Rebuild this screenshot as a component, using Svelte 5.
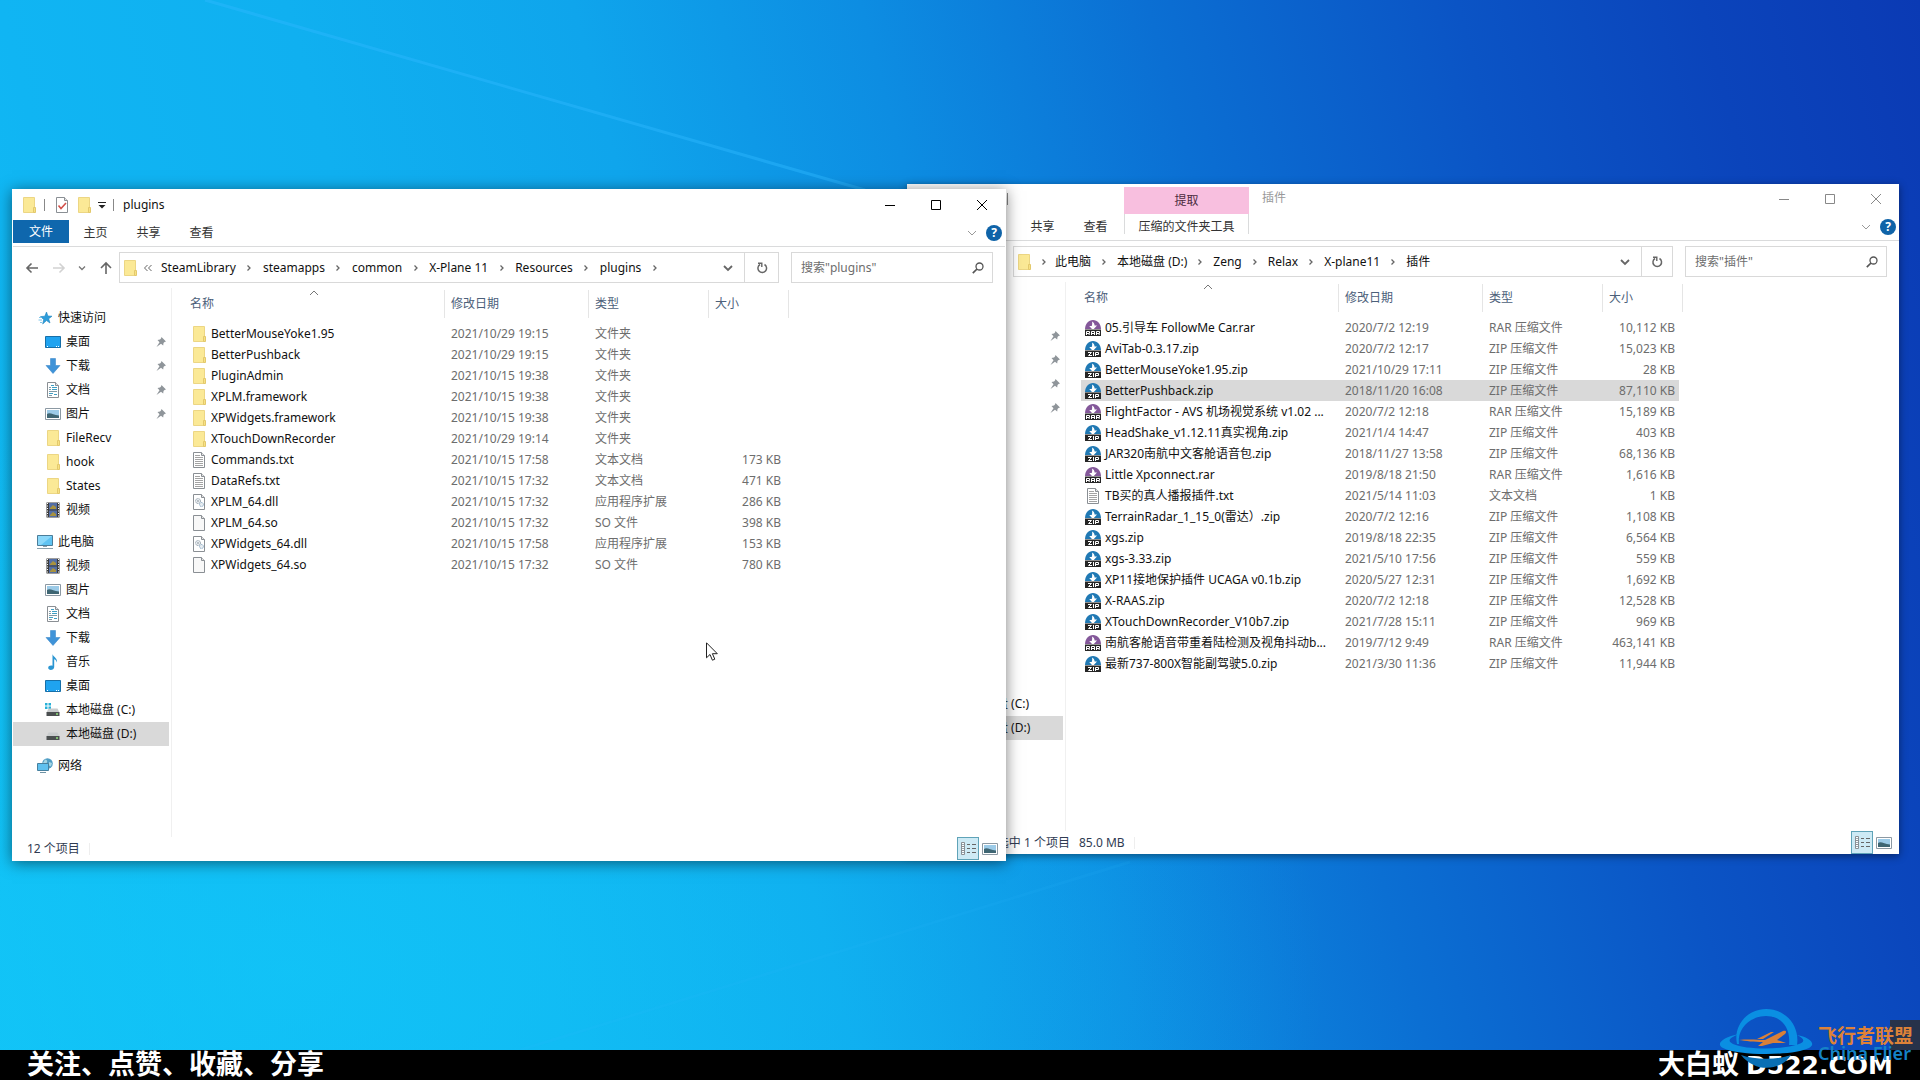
<script lang="ts">
  type Entry = { name: string; date: string; type: string; size?: string; icon: string };
  type Explorer = {
    title: string;
    context?: { group: string; tab: string };
    truncated?: boolean;
    crumbs: string[];
    entries: Entry[];
    selected?: string;
    status: string[];
  };

  const folder = "文件夹";
  const zip = "ZIP 压缩文件";
  const rar = "RAR 压缩文件";

  const sidebar = [
    [
      { label: "快速访问", icon: "star" },
      { label: "桌面", icon: "desktop", pinned: true },
      { label: "下载", icon: "download", pinned: true },
      { label: "文档", icon: "document", pinned: true },
      { label: "图片", icon: "picture", pinned: true },
      { label: "FileRecv", icon: "folder" },
      { label: "hook", icon: "folder" },
      { label: "States", icon: "folder" },
      { label: "视频", icon: "video" },
    ],
    [
      { label: "此电脑", icon: "pc" },
      { label: "视频", icon: "video" },
      { label: "图片", icon: "picture" },
      { label: "文档", icon: "document" },
      { label: "下载", icon: "download" },
      { label: "音乐", icon: "music" },
      { label: "桌面", icon: "desktop" },
      { label: "本地磁盘 (C:)", icon: "system-disk" },
      { label: "本地磁盘 (D:)", icon: "disk", selected: true },
    ],
    [{ label: "网络", icon: "network" }],
  ];

  const archives: Explorer = {
    title: "插件",
    context: { group: "提取", tab: "压缩的文件夹工具" },
    crumbs: ["此电脑", "本地磁盘 (D:)", "Zeng", "Relax", "X-plane11", "插件"],
    selected: "BetterPushback.zip",
    status: ["17 个项目", "选中 1 个项目", "85.0 MB"],
    entries: [
      { name: "05.引导车 FollowMe Car.rar", date: "2020/7/2 12:19", type: rar, size: "10,112 KB", icon: "rar" },
      { name: "AviTab-0.3.17.zip", date: "2020/7/2 12:17", type: zip, size: "15,023 KB", icon: "zip" },
      { name: "BetterMouseYoke1.95.zip", date: "2021/10/29 17:11", type: zip, size: "28 KB", icon: "zip" },
      { name: "BetterPushback.zip", date: "2018/11/20 16:08", type: zip, size: "87,110 KB", icon: "zip" },
      { name: "FlightFactor - AVS 机场视觉系统 v1.02 ...", date: "2020/7/2 12:18", type: rar, size: "15,189 KB", icon: "rar" },
      { name: "HeadShake_v1.12.11真实视角.zip", date: "2021/1/4 14:47", type: zip, size: "403 KB", icon: "zip" },
      { name: "JAR320南航中文客舱语音包.zip", date: "2018/11/27 13:58", type: zip, size: "68,136 KB", icon: "zip" },
      { name: "Little Xpconnect.rar", date: "2019/8/18 21:50", type: rar, size: "1,616 KB", icon: "rar" },
      { name: "TB买的真人播报插件.txt", date: "2021/5/14 11:03", type: "文本文档", size: "1 KB", icon: "text" },
      { name: "TerrainRadar_1_15_0(雷达）.zip", date: "2020/7/2 12:16", type: zip, size: "1,108 KB", icon: "zip" },
      { name: "xgs.zip", date: "2019/8/18 22:35", type: zip, size: "6,564 KB", icon: "zip" },
      { name: "xgs-3.33.zip", date: "2021/5/10 17:56", type: zip, size: "559 KB", icon: "zip" },
      { name: "XP11接地保护插件 UCAGA v0.1b.zip", date: "2020/5/27 12:31", type: zip, size: "1,692 KB", icon: "zip" },
      { name: "X-RAAS.zip", date: "2020/7/2 12:18", type: zip, size: "12,528 KB", icon: "zip" },
      { name: "XTouchDownRecorder_V10b7.zip", date: "2021/7/28 15:11", type: zip, size: "969 KB", icon: "zip" },
      { name: "南航客舱语音带重着陆检测及视角抖动b...", date: "2019/7/12 9:49", type: rar, size: "463,141 KB", icon: "rar" },
      { name: "最新737-800X智能副驾驶5.0.zip", date: "2021/3/30 11:36", type: zip, size: "11,944 KB", icon: "zip" },
    ],
  };

  const plugins: Explorer = {
    title: "plugins",
    truncated: true,
    crumbs: ["SteamLibrary", "steamapps", "common", "X-Plane 11", "Resources", "plugins"],
    status: ["12 个项目"],
    entries: [
      { name: "BetterMouseYoke1.95", date: "2021/10/29 19:15", type: folder, icon: "folder" },
      { name: "BetterPushback", date: "2021/10/29 19:15", type: folder, icon: "folder" },
      { name: "PluginAdmin", date: "2021/10/15 19:38", type: folder, icon: "folder" },
      { name: "XPLM.framework", date: "2021/10/15 19:38", type: folder, icon: "folder" },
      { name: "XPWidgets.framework", date: "2021/10/15 19:38", type: folder, icon: "folder" },
      { name: "XTouchDownRecorder", date: "2021/10/29 19:14", type: folder, icon: "folder" },
      { name: "Commands.txt", date: "2021/10/15 17:58", type: "文本文档", size: "173 KB", icon: "text" },
      { name: "DataRefs.txt", date: "2021/10/15 17:32", type: "文本文档", size: "471 KB", icon: "text" },
      { name: "XPLM_64.dll", date: "2021/10/15 17:32", type: "应用程序扩展", size: "286 KB", icon: "dll" },
      { name: "XPLM_64.so", date: "2021/10/15 17:32", type: "SO 文件", size: "398 KB", icon: "blank" },
      { name: "XPWidgets_64.dll", date: "2021/10/15 17:58", type: "应用程序扩展", size: "153 KB", icon: "dll" },
      { name: "XPWidgets_64.so", date: "2021/10/15 17:32", type: "SO 文件", size: "780 KB", icon: "blank" },
    ],
  };
</script>

{#snippet icon(name: string)}
  <svg class="icon" viewBox="0 0 16 16" aria-hidden="true">
    {#if name === "folder"}
      <path d="M2.500.5h11v15h-11z" fill="#fbe996" stroke="#ecd684" />
      <path d="M12.500 10.500h2v5h-2z" fill="#f8e184" stroke="#e3c96c" />
    {:else if name === "text" || name === "blank" || name === "dll" || name === "document" || name === "check"}
      <path d="M2.500.5h8l3 3v12h-11z" fill={name === "blank" ? "#f8f8f8" : "#fff"} stroke="#8a8f94" />
      <path d="M10.500.5v3h3" fill="#e4e4e4" stroke="#8a8f94" />
      {#if name === "text"}
        <path d="M4 3.500h5M4 5.500h8M4 7.500h8M4 9.500h8M4 11.500h8M4 13.500h8" stroke="#a3a3a3" />
      {:else if name === "document"}
        <path d="M4 5.500h2M4 7.500h2M4 9.500h8M4 13.500h3" stroke="#7f9aa6" />
        <path d="M6 3.500h3M7 5.500h5M7 7.500h5M4 11.500h4M9 12.500h3" stroke="#3f9fc4" />
      {:else if name === "dll"}
        <circle cx="7" cy="7" r="2.5" fill="#e8edf1" stroke="#8d9aa5" stroke-dasharray="1.2 .6" />
        <circle cx="7" cy="7" r=".8" fill="#7d8790" />
        <circle cx="10.500" cy="10.500" r="2" fill="#e8edf1" stroke="#7fa3c0" stroke-dasharray="1 .6" />
      {:else if name === "check"}
        <path d="M4.500 8.500l2.500 3 5-5.500" fill="none" stroke="#d2504a" stroke-width="1.6" />
      {/if}
    {:else if name === "rar" || name === "zip"}
      <path d="M0 9C.3 3.500 3.500 0 8 0s7.700 3.500 8 9z" fill={name === "rar" ? "#84589a" : "#2079b4"} />
      <path d="M7 1.500c1.500.8 2.600 2.200 2.600 4H12L8.800 9H7L4.200 6h2.500c.6-1.500.6-3 .3-4.500z" fill="#fff" />
      <path d="M0 9.500h16V16H0z" fill="#262626" />
      {#if name === "zip"}
        <path d="M3 11.500h3.500L3.500 14.500H7M8.500 11v4M10.500 15v-3.500h3v2h-3" fill="none" stroke="#fff" />
      {:else}
        <path d="M1.500 15v-3.500h3v2h-3M3.500 13.500l1 1.500M6.500 15v-3.500h3V15M6.500 13.500h3M11.500 15v-3.500h3v2h-3M13.500 13.500l1 1.500" fill="none" stroke="#fff" />
      {/if}
    {:else if name === "star"}
      <path d="M9.500 2l1.400 4 4.100.2-3.300 2.600 1.300 4.200-3.500-2.400L5.700 14l1-4.500L3.500 6.600l4.300-.4z" fill="#2c9ddb" stroke="#1f83bd" stroke-width=".6" />
      <path d="M2 7.500h3M1.500 10h3.500M3 12.500h2" stroke="#5db7e6" stroke-width=".8" />
    {:else if name === "desktop"}
      <path d="M.5 2.500h15v11H.5z" fill="#1fa3f0" stroke="#176fa8" />
      <path d="M2 12.500h1M11 12.500h1M13 12.500h1" stroke="#fff" />
    {:else if name === "download"}
      <path d="M5.500.5h5v7h4.500L8 15.500 1 7.500h4.500z" fill="#3f93d8" stroke="#2c7fc4" stroke-width=".5" />
    {:else if name === "picture"}
      <path d="M.5 2.500h15v11H.5z" fill="#fff" stroke="#8c99a3" />
      <path d="M2 4h12v8H2z" fill="#9ccbe8" />
      <path d="M2 8c3-2 6 1 12 1.500V12H2z" fill="#3f6673" />
    {:else if name === "video"}
      <path d="M1.500.5h13v15h-13z" fill="#3a3a3a" />
      <path d="M4 1h8v6.500H4zM4 8.500h8V15H4z" fill="#536ea5" />
      <path d="M5 6l3-3 3 2v2H5zM5 13l3-3 3 2v2H5z" fill="#a8923f" />
      <path d="M2.500 1v14M13.500 1v14" stroke="#fff" stroke-dasharray="1 1.500" />
    {:else if name === "pc"}
      <path d="M.5 1.500h15v10H.5z" fill="#5fc3f2" stroke="#4b7d99" />
      <path d="M1 2h14L4 11H1z" fill="#8bd8fa" />
      <path d="M6 12.500h4M0 14.500h16" stroke="#8aa0ab" />
    {:else if name === "music"}
      <path d="M7.500 0c.5 3 5 3.500 4.500 8.500-.7-2-1.700-3-2.800-3.300V13c0 3.500-6 4-6 .8 0-2 2.500-2.800 4.300-2z" fill="#2b96d2" />
    {:else if name === "disk" || name === "system-disk"}
      {#if name === "system-disk"}
        <path d="M0 1h2.500v2.500H0zM3.500 1H6v2.500H3.500zM0 4.500h2.500V7H0zM3.500 4.500H6V7H3.500z" fill="#27b0d8" />
      {/if}
      <path d="M3.500 6.500h9l2 4h-13z" fill="#c9cccd" />
      <path d="M1.500 10h13v4h-13z" fill="#4b4f50" />
      <path d="M11 12h2" stroke="#8fe07d" stroke-width="1.500" />
    {:else if name === "network"}
      <circle cx="10.500" cy="5.500" r="5.300" fill="#4f9dc4" />
      <path d="M8 1.500c2 0 3 2 1.500 3.500S7 7 6 5zM12 4l3 1-1 3.500-2-1z" fill="#a6d6e4" />
      <path d="M.5 5.500h11v7H.5z" fill="#5fc0ee" stroke="#47809e" />
      <path d="M3 14.500h6" stroke="#6f93a5" />
    {/if}
  </svg>
{/snippet}

{#snippet arrow()}
  <svg class="chevron" viewBox="0 0 8 8" aria-hidden="true">
    <path d="M2.500 1.500L5 4 2.500 6.500" fill="none" stroke="#666" stroke-width="1.300" />
  </svg>
{/snippet}

{#snippet explorer(win: Explorer)}
  <header class="titlebar">
    <div class="quick" class:wide={win.context}>
      {@render icon("folder")}
      <span class="divider"></span>
      {@render icon("check")}
      {@render icon("folder")}
      <svg class="chevron" viewBox="1 0 8 8" aria-hidden="true">
        <path d="M1 1.500h8" stroke="#222" />
        <path d="M1.500 4h7L5 7.500z" fill="#222" />
      </svg>
      <span class="divider"></span>
      {#if !win.context}<span class="title">{win.title}</span>{/if}
    </div>
    {#if win.context}
      <span class="context-group">{win.context.group}</span>
      <span class="title">{win.title}</span>
    {/if}
    <div class="controls">
      <button aria-label="最小化"><svg viewBox="0 0 12 12"><path d="M1 6.500h10" /></svg></button>
      <button aria-label="最大化"><svg viewBox="0 0 12 12"><path d="M1.500 1.500h9v9h-9z" /></svg></button>
      <button aria-label="关闭"><svg viewBox="0 0 12 12"><path d="M1 1l10 10M11 1L1 11" /></svg></button>
    </div>
  </header>

  <nav class="ribbon">
    <button class="file-tab">文件</button>
    <button>主页</button>
    <button>共享</button>
    <button>查看</button>
    {#if win.context}<button class="context-tab">{win.context.tab}</button>{/if}
    <div class="ribbon-end">
      <button aria-label="展开功能区">
        <svg class="glyph" viewBox="0 0 12 12"><path d="M2 4l4 4 4-4" fill="none" stroke="#999" /></svg>
      </button>
      <button class="help" aria-label="帮助">?</button>
    </div>
  </nav>

  <div class="toolbar">
    <div class="history">
      <button aria-label="后退">
        <svg class="nav" viewBox="0 0 14 14"><path d="M13 7H2M6.500 2.500L2 7l4.500 4.500" stroke="#666" /></svg>
      </button>
      <button aria-label="前进">
        <svg class="nav" viewBox="0 0 14 14"><path d="M1 7h11M7.500 2.500L12 7l-4.500 4.500" stroke="#d2d2d2" /></svg>
      </button>
      <button aria-label="最近位置">
        <svg class="chevron" viewBox="0 0 8 8"><path d="M1 2.500l3 3 3-3" fill="none" stroke="#777" stroke-width="1.300" /></svg>
      </button>
      <button aria-label="上移">
        <svg class="nav" viewBox="0 0 14 14"><path d="M7 13V2M2 7l5-5 5 5" stroke="#666" /></svg>
      </button>
    </div>
    <div class="address">
      {@render icon("folder")}
      {#if win.truncated}
        <svg class="more" viewBox="0 0 10 8" aria-hidden="true">
          <path d="M4.500 1L1.500 4l3 3M8.500 1l-3 3 3 3" fill="none" stroke="#666" />
        </svg>
      {:else}
        <span class="root-gap">{@render arrow()}</span>
      {/if}
      {#each win.crumbs as crumb, index (crumb)}
        <button>{crumb}</button>
        {#if win.truncated || index < win.crumbs.length - 1}
          <span class="gap">{@render arrow()}</span>
        {/if}
      {/each}
      <button class="history-toggle" aria-label="上一个位置">
        <svg class="glyph" viewBox="0 0 12 12"><path d="M2 4l4 4 4-4" fill="none" stroke="#666" stroke-width="1.800" /></svg>
      </button>
      <button class="refresh" aria-label="刷新">
        <svg class="glyph" viewBox="0 0 12 12">
          <path d="M8.500 2.500a4.300 4.300 0 1 1-4.500 0" fill="none" stroke="#666" stroke-width="1.500" />
          <path d="M2 1.200h3.800V5" fill="none" stroke="#666" stroke-width="1.400" />
        </svg>
      </button>
    </div>
    <div class="search">
      <input type="text" aria-label="搜索" placeholder={`搜索"${win.title}"`} />
      <svg class="glyph" viewBox="0 0 12 12" aria-hidden="true">
        <circle cx="7.500" cy="4.500" r="3.500" fill="none" stroke="#555" stroke-width="1.300" />
        <path d="M5 7L.8 11.200" stroke="#555" stroke-width="1.700" />
      </svg>
    </div>
  </div>

  <div class="content">
    <aside>
      {#each sidebar as group}
        <ul>
          {#each group as item, index}
            <li class:root={index === 0} class:selected={item.selected}>
              {@render icon(item.icon)}
              <span>{item.label}</span>
              {#if item.pinned}
                <svg class="pin" viewBox="0 0 12 12" aria-hidden="true">
                  <path d="M6.500 1L11 5.500 9.500 6 8.500 7l-.3 2.500L6 7.800 1.500 11 4.500 6.300 2.500 4 5 3.600l1-1z" fill="#8f959a" />
                </svg>
              {/if}
            </li>
          {/each}
        </ul>
      {/each}
    </aside>
    <table>
      <thead>
        <tr>
          <th class="name">
            名称
            <svg class="sort" viewBox="0 0 10 6" aria-hidden="true"><path d="M1 5l4-4 4 4" fill="none" stroke="#777" /></svg>
          </th>
          <th class="date">修改日期</th>
          <th class="type">类型</th>
          <th class="size">大小</th>
        </tr>
      </thead>
      <tbody>
        {#each win.entries as entry (entry.name)}
          <tr class:selected={entry.name === win.selected}>
            <td class="name"><span class="file">{@render icon(entry.icon)}{entry.name}</span></td>
            <td>{entry.date}</td>
            <td>{entry.type}</td>
            <td class="size">{entry.size ?? ""}</td>
          </tr>
        {/each}
      </tbody>
    </table>
  </div>

  <footer class="status">
    {#each win.status as text}
      <span>{text}</span>
    {/each}
    <span class="end"></span>
    <div class="views">
      <button class="on" aria-label="详细信息">
        <svg viewBox="0 0 18 16">
          <path d="M2.500 1.500h3v12h-3zM2.500 5.500h3M2.500 9.500h3" fill="#fff" stroke="#8a8f94" />
          <path d="M4 3v1M4 7v1M4 11v1" stroke="#356" />
          <path d="M8 3.500h3M13 3.500h4M8 7.500h3M13 7.500h4M8 11.500h3M13 11.500h4" stroke="#666" />
        </svg>
      </button>
      <button aria-label="大图标">{@render icon("picture")}</button>
    </div>
  </footer>
{/snippet}

<main class="desktop">
  <svg class="beam" viewBox="0 0 1920 1080" preserveAspectRatio="none" aria-hidden="true">
    <path d="M205 0L865 190" stroke="#2fb8ff" stroke-opacity=".45" stroke-width="3" />
    <path d="M1130 862L520 1050" stroke="#2fb8ff" stroke-opacity=".1" stroke-width="3" />
  </svg>

  <section class="window back">{@render explorer(archives)}</section>
  <section class="window front">{@render explorer(plugins)}</section>

  <svg class="cursor" viewBox="0 0 12 19" aria-hidden="true">
    <path d="M.5.8v15l3.500-3.300 2.400 5.700 2.400-1-2.400-5.500h4.900z" fill="#fff" stroke="#222" />
  </svg>

  <footer class="banner">
    <span>关注、点赞、收藏、分享</span>
    <span>大白蚁 <span class="site">D522.COM</span></span>
  </footer>

  <div class="corner"></div>
  <div class="watermark">
    <svg viewBox="0 0 96 64" aria-hidden="true">
      <path d="M18 36C14 18 28 1 47 1c20 0 34 17 31 36h-8C72 18 61 8 47 8 32 8 18 20 20 36z" fill="#0a8fe2" />
      <path d="M20 26C4 29-4 36 4 40c16 8 70 8 86 0 8-4 0-11-12-13 8 4 8 7 2 9-16 6-52 6-66 0-6-3-4-6 6-10z" fill="#0a8fe2" />
      <path d="M22 47c14 5 36 5 50 0-8 14-34 20-50 0z" fill="#0a6fb4" />
      <path d="M20 32c10-1 20 0 26 0l18-9c3-1 4 1 2 3l-8 6 9 3-13 0-11 3-4 0 5-4c-8 0-18-1-24-2z" fill="#d98038" />
      <path d="M38 31l14-7 3 0-11 7z" fill="#d98038" />
    </svg>
    <div>
      <strong>飞行者联盟</strong>
      <em>China Flier</em>
    </div>
  </div>
</main>

<style>
  :global(body) {
    background: #0b8ae0;
  }

  .desktop {
    position: relative;
    min-height: 100vh;
    display: flex;
    flex-direction: column;
    overflow: hidden;
    box-sizing: border-box;
    background:
      radial-gradient(ellipse at 15% 90%, rgba(18, 200, 248, 0.7) 0%, rgba(18, 200, 248, 0) 45%),
      linear-gradient(
        75deg,
        #11c0f5 0%,
        #10b5f3 13%,
        #10b0f0 26%,
        #0fa5ec 39%,
        #0d8de2 52%,
        #0b6fd3 65%,
        #0b54c5 79%,
        #0b44bb 90%,
        #0b3ab4 100%
      );
    color: #111;
    font: 12px/16px "Noto Sans", "Noto Sans CJK SC", sans-serif;
  }

  .beam {
    position: absolute;
    inset: 0;
    width: 100%;
    height: 100%;
  }

  button {
    border: 0;
    padding: 0;
    background: none;
    color: inherit;
    font: inherit;
    white-space: nowrap;
  }

  svg {
    display: block;
    flex: none;
  }

  .icon {
    width: 16px;
    height: 16px;
  }

  .glyph {
    width: 12px;
    height: 12px;
  }

  .chevron {
    width: 8px;
    height: 8px;
  }

  .window {
    position: absolute;
    display: flex;
    flex-direction: column;
    min-height: 670px;
    background: #fff;
  }

  .back {
    top: 184px;
    left: 907px;
    right: 21px;
    box-shadow: 0 2px 8px rgba(0, 0, 0, 0.45);
  }

  .front {
    top: 189px;
    left: 12px;
    right: 914px;
    border: 1px solid #fff;
    box-shadow: 0 2px 14px rgba(0, 0, 0, 0.5);
  }

  .titlebar {
    display: flex;
    height: 30px;
  }

  .quick {
    display: flex;
    align-items: center;
    gap: 6px;
    padding-left: 8px;
    box-sizing: border-box;
  }

  .quick.wide {
    width: 217px;
  }

  .divider {
    width: 1px;
    height: 12px;
    margin: 0 3px 0 1px;
    background: #888;
  }

  .back .title {
    padding: 6px 0 0 13px;
    color: #999;
  }

  .context-group {
    width: 125px;
    margin-top: 3px;
    background: #f8bfdf;
    color: #4a2b3d;
    line-height: 27px;
    text-align: center;
  }

  .controls {
    display: flex;
    margin-left: auto;
    color: #000;
  }

  .back .controls {
    color: #888;
  }

  .controls button {
    display: grid;
    place-items: center;
    width: 46px;
    height: 29px;
  }

  .controls svg {
    width: 12px;
    height: 12px;
    fill: none;
    stroke: currentColor;
  }

  .ribbon {
    display: flex;
    height: 26px;
    border-bottom: 1px solid #dadbdc;
    color: #333;
  }

  .ribbon > button {
    width: 53px;
    height: 23px;
    padding-top: 2px;
  }

  .ribbon .file-tab {
    width: 56px;
    padding-top: 0;
    background: #0f67ad;
    color: #fff;
  }

  .ribbon .context-tab {
    width: 125px;
    height: 20px;
    margin-left: 2px;
    padding-top: 5px;
    border: solid #dadbdc;
    border-width: 0 1px;
  }

  .ribbon-end {
    display: flex;
    align-items: center;
    gap: 8px;
    margin-left: auto;
    padding-right: 3px;
  }

  .help {
    width: 16px;
    height: 16px;
    border-radius: 50%;
    background: #0f63a8;
    color: #fff;
    font-weight: bold;
  }

  .toolbar {
    display: flex;
    gap: 12px;
    padding: 5px 12px 5px 0;
  }

  .history {
    display: flex;
    align-items: center;
    justify-content: space-between;
    width: 88px;
    padding-left: 12px;
    margin-right: -6px;
  }

  .nav {
    width: 14px;
    height: 14px;
    fill: none;
    stroke-width: 1.6;
  }

  .address {
    display: flex;
    flex: 1;
    align-items: center;
    height: 29px;
    padding-left: 2px;
    border: 1px solid #d9d9d9;
  }

  .gap,
  .root-gap {
    display: flex;
    justify-content: center;
    width: 27px;
  }

  .back .gap {
    width: 26px;
  }

  .root-gap {
    width: 23px;
  }

  .more {
    width: 10px;
    height: 8px;
    margin: 0 8px 0 5px;
  }

  .history-toggle {
    margin-left: auto;
    margin-right: 10px;
  }

  .refresh {
    display: grid;
    place-items: center;
    width: 34px;
    height: 100%;
    border-left: 1px solid #d9d9d9;
  }

  .back .refresh {
    width: 31px;
  }

  .search {
    display: flex;
    align-items: center;
    width: 202px;
    padding: 0 8px 0 9px;
    box-sizing: border-box;
    border: 1px solid #d9d9d9;
  }

  .search input {
    flex: 1;
    min-width: 0;
    padding: 0;
    border: 0;
    outline: 0;
    font: inherit;
  }

  .search input::placeholder {
    color: #6d6d6d;
    opacity: 1;
  }

  .content {
    display: flex;
    flex: 1;
    align-items: stretch;
  }

  aside {
    width: 158px;
    padding-top: 18px;
    border-right: 1px solid #f0f0f0;
  }

  ul {
    margin: 0 0 8px;
    padding: 0;
    list-style: none;
  }

  li {
    display: flex;
    align-items: center;
    gap: 5px;
    height: 24px;
    margin-right: 2px;
    padding: 0 2px 0 32px;
  }

  li.root {
    padding-left: 24px;
  }

  li.selected {
    background: #d9d9d9;
  }

  .pin {
    width: 12px;
    height: 12px;
    margin-left: auto;
  }

  table {
    align-self: flex-start;
    margin: 2px 0 0 15px;
    border-spacing: 0;
    table-layout: fixed;
    width: 602px;
  }

  th,
  td {
    padding: 0 0 0 6px;
    box-sizing: border-box;
    text-align: left;
    font-weight: normal;
    white-space: nowrap;
  }

  th {
    position: relative;
    height: 28px;
    border-right: 1px solid #e5e5e5;
    color: #4c607a;
  }

  th.name {
    width: 258px;
    padding-left: 3px;
  }

  th.date {
    width: 144px;
  }

  th.type {
    width: 120px;
  }

  th.size {
    width: 80px;
  }

  .sort {
    position: absolute;
    top: 0;
    left: 122px;
    width: 10px;
    height: 6px;
  }

  tbody::before {
    content: "";
    display: block;
    height: 5px;
  }

  td {
    height: 21px;
    color: #6d6d6d;
  }

  td.name {
    padding-left: 4px;
    color: #111;
  }

  td.size {
    padding-right: 4px;
    border-right: 4px solid transparent;
    background-clip: padding-box;
    text-align: right;
  }

  tr.selected td {
    background-color: #d9d9d9;
  }

  .file {
    display: flex;
    align-items: center;
    gap: 4px;
  }

  .status {
    display: flex;
    align-items: center;
    gap: 9px;
    height: 23px;
    padding-left: 14px;
    color: #2f3b52;
  }

  .back .status span:first-child {
    margin-right: 14px;
  }

  .end {
    width: 1px;
    height: 12px;
    background: #eee;
  }

  .views {
    display: flex;
    gap: 2px;
    margin-left: auto;
    padding-right: 6px;
  }

  .views button {
    display: grid;
    place-items: center;
    width: 18px;
    height: 23px;
  }

  .views .on {
    width: 22px;
    border: 1px solid #5fa3b8;
    background: #cdeaf5;
  }

  .views .on svg {
    width: 18px;
    height: 16px;
    fill: none;
  }

  .cursor {
    position: absolute;
    top: 642px;
    left: 706px;
    width: 12px;
    height: 19px;
  }

  .banner {
    position: relative;
    display: flex;
    justify-content: space-between;
    margin-top: auto;
    height: 30px;
    padding: 0 27px;
    background: #000;
    color: #fff;
    font-size: 27px;
    font-weight: 600;
    line-height: 28px;
  }

  .site {
    font-family: "DejaVu Sans", sans-serif;
    font-size: 25px;
  }

  .corner {
    position: absolute;
    right: 0;
    bottom: 30px;
    width: 30px;
    height: 30px;
    background: rgba(45, 47, 54, 0.85);
  }

  .watermark {
    position: absolute;
    right: 7px;
    bottom: 8px;
    display: flex;
    gap: 3px;
    align-items: center;
  }

  .watermark svg {
    width: 96px;
    height: 64px;
  }

  .watermark div {
    display: flex;
    flex-direction: column;
    padding-top: 10px;
  }

  .watermark strong {
    color: #dd8238;
    font-size: 19px;
    font-weight: 600;
    line-height: 16px;
  }

  .watermark em {
    color: #1583c6;
    font-size: 18px;
    font-style: normal;
    font-weight: 600;
    line-height: 18px;
  }
</style>
